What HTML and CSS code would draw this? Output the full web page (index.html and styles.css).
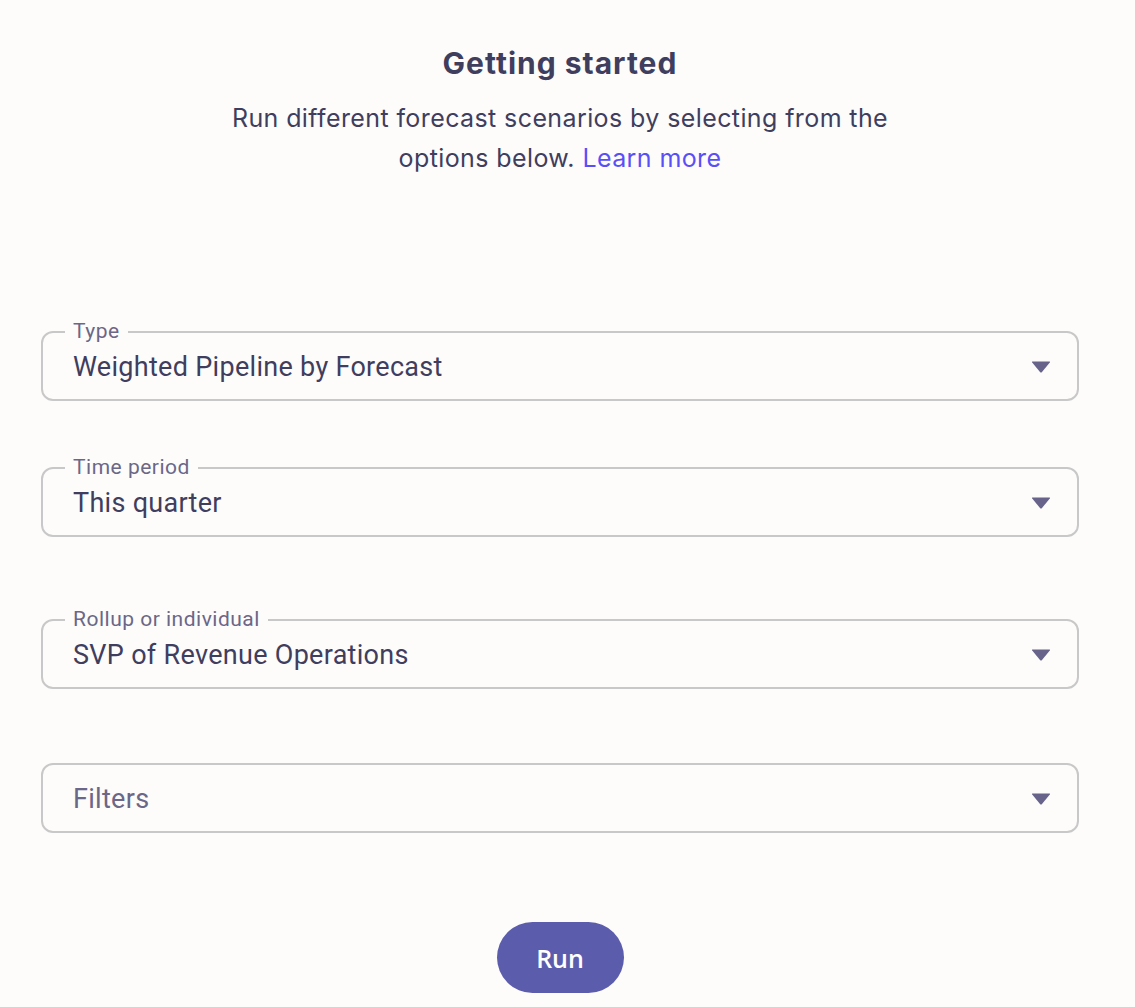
FILE: index.html
```html
<!DOCTYPE html>
<html>
<head>
<meta charset="utf-8">
<link rel="stylesheet" href="styles.css">
</head>
<body>
<main class="page">
  <header class="intro">
    <h1 class="title">Getting started</h1>
    <p class="lead">Run different forecast scenarios by selecting from the options below. <a class="link" href="#">Learn more</a></p>
  </header>
  <section class="form">
    <div class="field field-type">
      <span class="label">Type</span>
      <span class="value">Weighted Pipeline by Forecast</span>
      <svg class="caret" width="20" height="14" viewBox="0 0 20 14"><path d="M1.5 1.5 H18.5 Q19.5 1.5 18.8 2.6 L11 12 Q10 13 9 12 L1.2 2.6 Q0.5 1.5 1.5 1.5 Z" fill="#67638a"/></svg>
    </div>
    <div class="field field-period">
      <span class="label">Time period</span>
      <span class="value">This quarter</span>
      <svg class="caret" width="20" height="14" viewBox="0 0 20 14"><path d="M1.5 1.5 H18.5 Q19.5 1.5 18.8 2.6 L11 12 Q10 13 9 12 L1.2 2.6 Q0.5 1.5 1.5 1.5 Z" fill="#67638a"/></svg>
    </div>
    <div class="field field-rollup">
      <span class="label">Rollup or individual</span>
      <span class="value">SVP of Revenue Operations</span>
      <svg class="caret" width="20" height="14" viewBox="0 0 20 14"><path d="M1.5 1.5 H18.5 Q19.5 1.5 18.8 2.6 L11 12 Q10 13 9 12 L1.2 2.6 Q0.5 1.5 1.5 1.5 Z" fill="#67638a"/></svg>
    </div>
    <div class="field field-filters">
      <span class="value placeholder">Filters</span>
      <svg class="caret" width="20" height="14" viewBox="0 0 20 14"><path d="M1.5 1.5 H18.5 Q19.5 1.5 18.8 2.6 L11 12 Q10 13 9 12 L1.2 2.6 Q0.5 1.5 1.5 1.5 Z" fill="#67638a"/></svg>
    </div>
  </section>
  <div class="actions">
    <button class="run">Run</button>
  </div>
</main>
</body>
</html>
```

FILE: styles.css
```css
html, body {
  margin: 0;
  padding: 0;
  background: #fdfcfb;
}

.page {
  display: flex;
  flex-direction: column;
  padding: 44px 56px 0 41px;
  font-family: Inter, "Noto Sans", sans-serif;
  color: #403e5e;
}

.intro {
  display: flex;
  flex-direction: column;
  align-items: center;
  text-align: center;
}

.title {
  margin: 0;
  font-size: 30px;
  line-height: 38px;
  font-weight: 700;
  letter-spacing: 1px;
  color: #403e5e;
}

.lead {
  margin: 16px 0 0;
  width: 700px;
  font-size: 25px;
  line-height: 40px;
  font-weight: 400;
  letter-spacing: 0.4px;
  color: #403e5e;
}

.link {
  color: #5a4ff7;
  text-decoration: none;
}

.form {
  display: flex;
  flex-direction: column;
  margin-top: 153px;
}

.field {
  position: relative;
  display: flex;
  align-items: center;
  height: 70px;
  box-sizing: border-box;
  border: 2px solid #c9c8c8;
  border-radius: 12px;
  padding: 2px 26px 0 30px;
  font-family: Roboto, "Noto Sans", sans-serif;
}

.field-period { margin-top: 66px; }
.field-rollup { margin-top: 82px; }
.field-filters { margin-top: 74px; }

.label {
  position: absolute;
  left: 22px;
  top: -15px;
  padding: 0 8px;
  background: #fdfcfb;
  font-size: 21px;
  line-height: 26px;
  letter-spacing: 0.5px;
  color: #6a6788;
}

.value {
  flex: 1;
  font-size: 27px;
  line-height: 32px;
  letter-spacing: 0.3px;
  color: #403e5e;
}

.placeholder {
  color: #6a6788;
}

.caret {
  flex: none;
}

.actions {
  display: flex;
  justify-content: center;
  margin-top: 89px;
}

.run {
  width: 127px;
  height: 71px;
  border: none;
  border-radius: 36px;
  background: #5c5cac;
  color: #ffffff;
  font-family: "Open Sans", "Noto Sans", sans-serif;
  font-size: 25px;
  font-weight: 600;
}
```
